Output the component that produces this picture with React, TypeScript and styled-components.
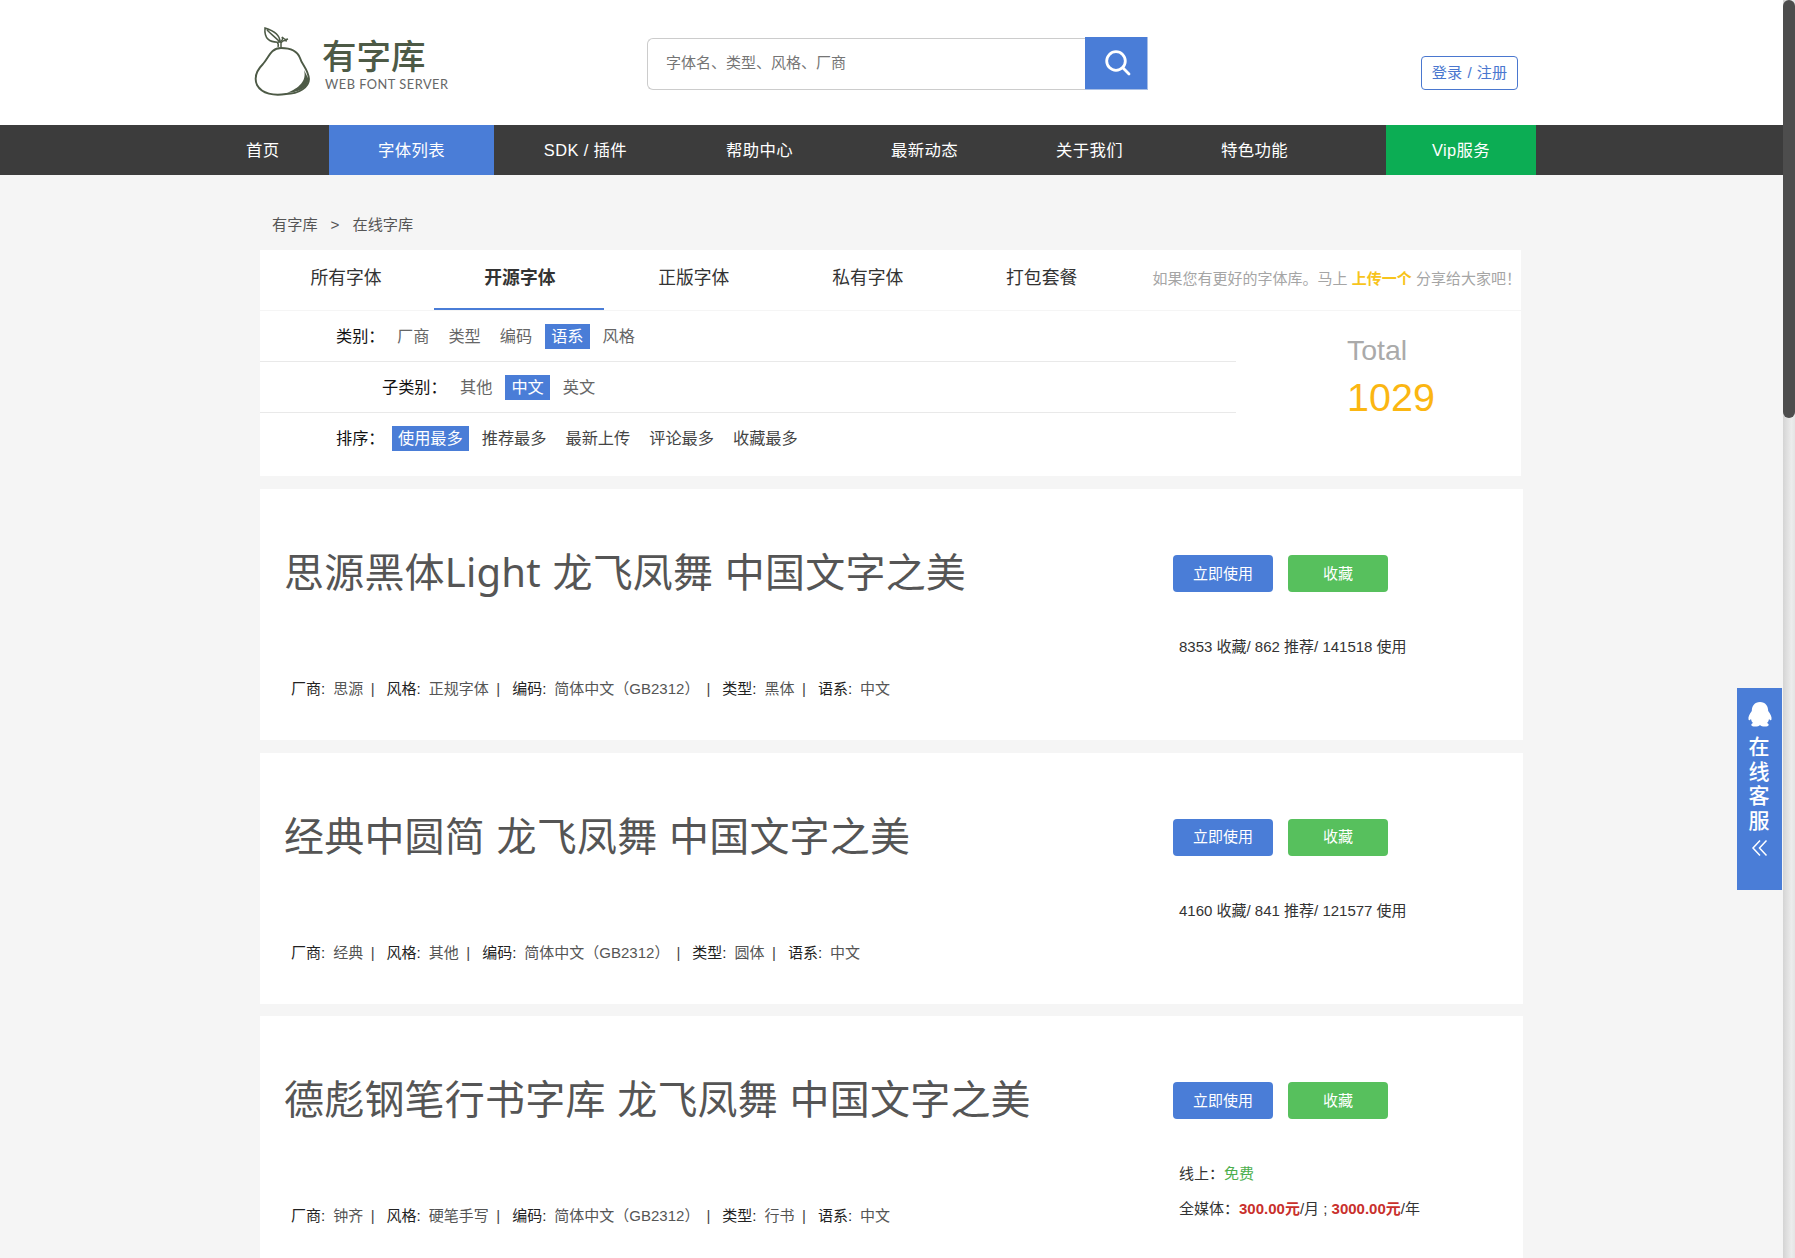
import React from "react";
import styled, { createGlobalStyle, css } from "styled-components";

const Global = createGlobalStyle`
  * { box-sizing: border-box; }
  html, body { margin: 0; height: 1258px; overflow: hidden; }
  body {
    background: #f5f5f5;
    color: #333;
    font: 15px/1.5 "Liberation Sans", "Noto Sans CJK SC", sans-serif;
  }
  ul { margin: 0; padding: 0; list-style: none; }
`;

const Page = styled.div`
  position: relative;
  width: 1795px;
  height: 1258px;
  overflow: hidden;
`;

const Header = styled.header`
  display: flex;
  align-items: flex-start;
  height: 125px;
  padding-left: 251px;
  background: #fff;
`;

const Logo = styled.a`
  display: flex;
  width: 396px;
  padding-top: 26px;
`;

const LogoText = styled.div`
  margin: 9px 0 0 9px;
  color: #4d5a46;
`;

const LogoName = styled.div`
  height: 40px;
  font: 500 34.5px/38px "Noto Sans CJK SC", sans-serif;
`;

const LogoSub = styled.div`
  margin: 2px 0 0 3px;
  font: 12.8px/14px Lato, sans-serif;
  letter-spacing: 0.5px;
  white-space: nowrap;
  color: #666;
`;

const Search = styled.form`
  display: flex;
  margin-top: 37px;
`;

const SearchInput = styled.input`
  width: 438px;
  height: 52px;
  margin-top: 1px;
  padding: 0 18px 3px;
  border: 1px solid #ccc;
  border-right: 0;
  border-radius: 6px 0 0 6px;
  outline: 0;
  font: inherit;
  &::placeholder { color: #757575; opacity: 1; }
`;

const SearchButton = styled.button`
  display: grid;
  place-items: center;
  width: 63px;
  height: 53px;
  padding: 0 0 0 3px;
  border: 0;
  border-right: 1px solid #a9bfe6;
  border-bottom: 1px solid #a9bfe6;
  background: #4a7dd7;
`;

const Login = styled.a`
  width: 97px;
  margin: 56px 0 0 273px;
  border: 1px solid #4a77cf;
  border-radius: 4px;
  color: #4a77cf;
  font-size: 15.2px;
  line-height: 32px;
  text-align: center;
  white-space: nowrap;
  word-spacing: 1px;
`;

const Nav = styled.nav`
  display: flex;
  height: 50px;
  padding-left: 246px;
  background: #3c3c3c;
`;

const NavItem = styled.a<{ $w: number; $tone?: string; $start?: boolean }>`
  width: ${(p) => p.$w}px;
  background: ${(p) => p.$tone ?? "transparent"};
  color: #fff;
  font-size: 16.4px;
  letter-spacing: 0.4px;
  line-height: 51px;
  text-align: ${(p) => (p.$start ? "left" : "center")};
`;

const Spacer = styled.span<{ $w: number }>`
  width: ${(p) => p.$w}px;
`;

const Main = styled.main`
  width: 1263px;
  margin-left: 260px;
`;

const Crumbs = styled.div`
  display: flex;
  gap: 13px;
  height: 75px;
  padding: 39px 0 0 12px;
  color: #555;
  font-size: 15.2px;
`;

const Panel = styled.section`
  width: 1261px;
  height: 226px;
  margin-bottom: 13px;
  background: #fff;
`;

const Tabs = styled.div`
  display: flex;
  height: 61px;
  border-bottom: 1px solid #f5f5f5;
`;

const Tab = styled.a<{ $active?: boolean }>`
  width: 170px;
  height: 60px;
  margin-right: 4px;
  padding-left: 2px;
  border-bottom: 2px solid ${(p) => (p.$active ? "#4a7dd7" : "transparent")};
  font-size: 17.8px;
  font-weight: ${(p) => (p.$active ? 700 : 400)};
  line-height: 56px;
  text-align: center;
`;

const Hint = styled.div`
  margin-left: 23px;
  color: #a5a5a5;
  line-height: 57px;
  white-space: nowrap;
`;

const Upload = styled.b`
  color: #f7c41c;
`;

const PanelBody = styled.div`
  display: flex;
`;

const Filters = styled.div`
  width: 976px;
`;

const FilterRow = styled.div<{ $indent: number; $last?: boolean }>`
  display: flex;
  height: 51px;
  padding: 13px 0 0 ${(p) => p.$indent}px;
  ${(p) => !p.$last && css`border-bottom: 1px solid #e9e9e9;`}
`;

const FilterLabel = styled.span<{ $w: number }>`
  width: ${(p) => p.$w}px;
  color: #111;
  font-size: 16.2px;
  line-height: 24px;
  white-space: nowrap;
`;

const Option = styled.a<{ $active?: boolean; $dark?: boolean }>`
  height: 25px;
  margin-right: 7px;
  padding: 0 6px;
  background: ${(p) => (p.$active ? "#4a7dd7" : "transparent")};
  color: ${(p) => (p.$active ? "#fff" : p.$dark ? "#444" : "#666")};
  font-size: 16.2px;
  line-height: 25px;
`;

const Total = styled.div`
  padding: 19px 0 0 111px;
  color: #aaa;
  font-size: 28.5px;
  line-height: 40px;
`;

const TotalCount = styled.div`
  color: #fbb612;
  font-size: 39.5px;
  line-height: 55px;
`;

const Card = styled.article`
  display: flex;
  height: 251px;
  margin-bottom: 12.6px;
  background: #fff;
`;

const CardInfo = styled.div`
  width: 913px;
  padding: 53px 0 0 24px;
`;

const Sample = styled.h2`
  margin: 0;
  height: 133px;
  color: #555;
  font: 400 40px/60px "Noto Sans", "Noto Sans CJK SC", sans-serif;
  letter-spacing: 0.2px;
  word-spacing: 1px;
  white-space: nowrap;
`;

const Meta = styled.ul`
  display: flex;
  padding-left: 7px;
  line-height: 28px;
  white-space: pre;
`;

const MetaItem = styled.li`
  color: #222;
`;

const MetaValue = styled.span`
  margin-left: 8px;
  color: #555;
`;

const Bar = styled.span<{ $wide?: boolean }>`
  margin: 0 12px 0 ${(p) => (p.$wide ? 7 : 7.5)}px;
  color: #444;
`;

const CardSide = styled.div`
  padding-top: 66px;
`;

const Buttons = styled.div`
  display: flex;
  gap: 15px;
`;

const Button = styled.button<{ $tone: string }>`
  width: 100px;
  height: 37px;
  padding: 1px 0 0;
  border: 0;
  border-radius: 4px;
  background: ${(p) => p.$tone};
  color: #fff;
  font: inherit;
`;

const Stats = styled.div`
  padding: 37px 0 0 6px;
  line-height: 35px;
  white-space: nowrap;
`;

const Free = styled.span`
  color: #4cae4c;
`;

const Price = styled.b`
  color: #c9302c;
`;

const Service = styled.aside`
  position: absolute;
  top: 688px;
  left: 1737px;
  display: flex;
  flex-direction: column;
  align-items: center;
  width: 45px;
  height: 202px;
  padding-top: 13px;
  background: #4a7dd7;
  color: #fff;
`;

const ServiceText = styled.div`
  width: 22px;
  margin: 6px 0 8px;
  font: 500 21px/24.6px "Noto Sans CJK SC", sans-serif;
`;

const ScrollTrack = styled.div`
  position: absolute;
  top: 0;
  right: 0;
  width: 12px;
  height: 1258px;
  background: linear-gradient(90deg, #d4d4d4, #ececec 70%, #e4e4e4);
`;

const ScrollThumb = styled.div`
  height: 418px;
  border-radius: 6px;
  background: #4d4d4d;
`;

const navItems = [
  { text: "首页", w: 83, start: true },
  { text: "字体列表", w: 165, tone: "#4a7dd7" },
  { text: "SDK / 插件", w: 183 },
  { text: "帮助中心", w: 165 },
  { text: "最新动态", w: 165 },
  { text: "关于我们", w: 165 },
  { text: "特色功能", w: 165 },
];

const tabs = ["所有字体", "开源字体", "正版字体", "私有字体", "打包套餐"];

const filters = [
  { label: "类别：", indent: 76, w: 55, active: "语系", options: ["厂商", "类型", "编码", "语系", "风格"] },
  { label: "子类别：", indent: 122, w: 72, active: "中文", options: ["其他", "中文", "英文"] },
  {
    label: "排序：",
    indent: 76,
    w: 56,
    active: "使用最多",
    dark: true,
    options: ["使用最多", "推荐最多", "最新上传", "评论最多", "收藏最多"],
  },
];

const fonts = [
  { name: "思源黑体Light", maker: "思源", style: "正规字体", kind: "黑体", stats: "8353 收藏/ 862 推荐/ 141518 使用" },
  { name: "经典中圆简", maker: "经典", style: "其他", kind: "圆体", stats: "4160 收藏/ 841 推荐/ 121577 使用" },
  { name: "德彪钢笔行书字库", maker: "钟齐", style: "硬笔手写", kind: "行书" },
];

const Pear = () => (
  <svg width="62" height="72" viewBox="0 0 62 72" fill="none" stroke="#4d5a46" strokeWidth="1.5">
    <path strokeWidth="1.900" d="M30 22C20 22 18 31 12 38C5 45 3 52 6 59C11 68 23 70 35 68C48 68 58 61 58 53C57 43 51 39 49 32C46 24 39 22 30 22Z" />
    <path d="M30 21V17C31 15 33 14 36 15M27 21C28 18 27 17 26 16M14 2C13 12 18 17 29 16C29 9 24 5 14 2ZM16 4C20 8 24 11 29 16" />
    <path d="M29 16C32 14 32 13 31 11C33 13 34 14 37 13" />
    <path d="M53 44C56 55 48 62 36 67C50 66 59 60 57 52Z" fill="#4d5a46" stroke="none" />
  </svg>
);

const SearchIcon = () => (
  <svg width="28" height="28" viewBox="0 0 28 28" fill="none" stroke="#fff" strokeWidth="2.8" strokeLinecap="round">
    <circle cx="12" cy="12" r="9.3" />
    <path d="M18.8 18.8L25 25" />
  </svg>
);

const Penguin = () => (
  <svg width="24" height="26" viewBox="0 0 24 26" fill="#fff">
    <path d="M12 1C6.500 1 3.800 5 3.800 10C1.500 13 0 16 .5 18.500C1 20 2.200 19 3 18C3.300 20 4 21 5 22C2 23.500 3 25.500 7 25.500C9.500 25.500 11 25 12 24C13 25 14.500 25.500 17 25.500C21 25.500 22 23.500 19 22C20 21 20.700 20 21 18C21.800 19 23 20 23.500 18.500C24 16 22.500 13 20.200 10C20.200 5 17.500 1 12 1Z" />
  </svg>
);

const Chevrons = () => (
  <svg width="18" height="18" viewBox="0 0 18 18" fill="none" stroke="#fff" strokeWidth="1.5">
    <path d="M9 1.500L2 9L9 16.500M15.500 1.500L8.500 9L15.500 16.500" />
  </svg>
);

export default function App() {
  return (
    <Page>
      <Global />
      <Header>
        <Logo>
          <Pear />
          <LogoText>
            <LogoName>有字库</LogoName>
            <LogoSub>WEB FONT SERVER</LogoSub>
          </LogoText>
        </Logo>
        <Search>
          <SearchInput placeholder="字体名、类型、风格、厂商" />
          <SearchButton type="button">
            <SearchIcon />
          </SearchButton>
        </Search>
        <Login>登录 / 注册</Login>
      </Header>
      <Nav>
        {navItems.map((n) => (
          <NavItem key={n.text} $w={n.w} $tone={n.tone} $start={n.start}>
            {n.text}
          </NavItem>
        ))}
        <Spacer $w={49} />
        <NavItem $w={150} $tone="#0cad54">Vip服务</NavItem>
      </Nav>
      <Main>
        <Crumbs>
          <span>有字库</span>
          <span>&gt;</span>
          <span>在线字库</span>
        </Crumbs>
        <Panel>
          <Tabs>
            {tabs.map((t) => (
              <Tab key={t} $active={t === "开源字体"}>{t}</Tab>
            ))}
            <Hint>
              如果您有更好的字体库。马上 <Upload>上传一个</Upload> 分享给大家吧！
            </Hint>
          </Tabs>
          <PanelBody>
            <Filters>
              {filters.map((f, i) => (
                <FilterRow key={f.label} $indent={f.indent} $last={i === 2}>
                  <FilterLabel $w={f.w}>{f.label}</FilterLabel>
                  {f.options.map((o) => (
                    <Option key={o} $active={o === f.active} $dark={f.dark}>{o}</Option>
                  ))}
                </FilterRow>
              ))}
            </Filters>
            <Total>
              Total
              <TotalCount>1029</TotalCount>
            </Total>
          </PanelBody>
        </Panel>
        {fonts.map((f) => (
          <Card key={f.name}>
            <CardInfo>
              <Sample>{f.name} 龙飞凤舞 中国文字之美</Sample>
              <Meta>
                <MetaItem>厂商:<MetaValue>{f.maker}</MetaValue><Bar>|</Bar></MetaItem>
                <MetaItem>风格:<MetaValue>{f.style}</MetaValue><Bar>|</Bar></MetaItem>
                <MetaItem>编码:<MetaValue>简体中文（GB2312）</MetaValue><Bar $wide>|</Bar></MetaItem>
                <MetaItem>类型:<MetaValue>{f.kind}</MetaValue><Bar>|</Bar></MetaItem>
                <MetaItem>语系:<MetaValue>中文</MetaValue></MetaItem>
              </Meta>
            </CardInfo>
            <CardSide>
              <Buttons>
                <Button $tone="#4a7dd7">立即使用</Button>
                <Button $tone="#57c05d">收藏</Button>
              </Buttons>
              <Stats>
                {f.stats ?? (
                  <>
                    <div>线上：<Free>免费</Free></div>
                    <div>全媒体：<Price>300.00元</Price>/月 ; <Price>3000.00元</Price>/年</div>
                  </>
                )}
              </Stats>
            </CardSide>
          </Card>
        ))}
      </Main>
      <Service>
        <Penguin />
        <ServiceText>在线客服</ServiceText>
        <Chevrons />
      </Service>
      <ScrollTrack>
        <ScrollThumb />
      </ScrollTrack>
    </Page>
  );
}
